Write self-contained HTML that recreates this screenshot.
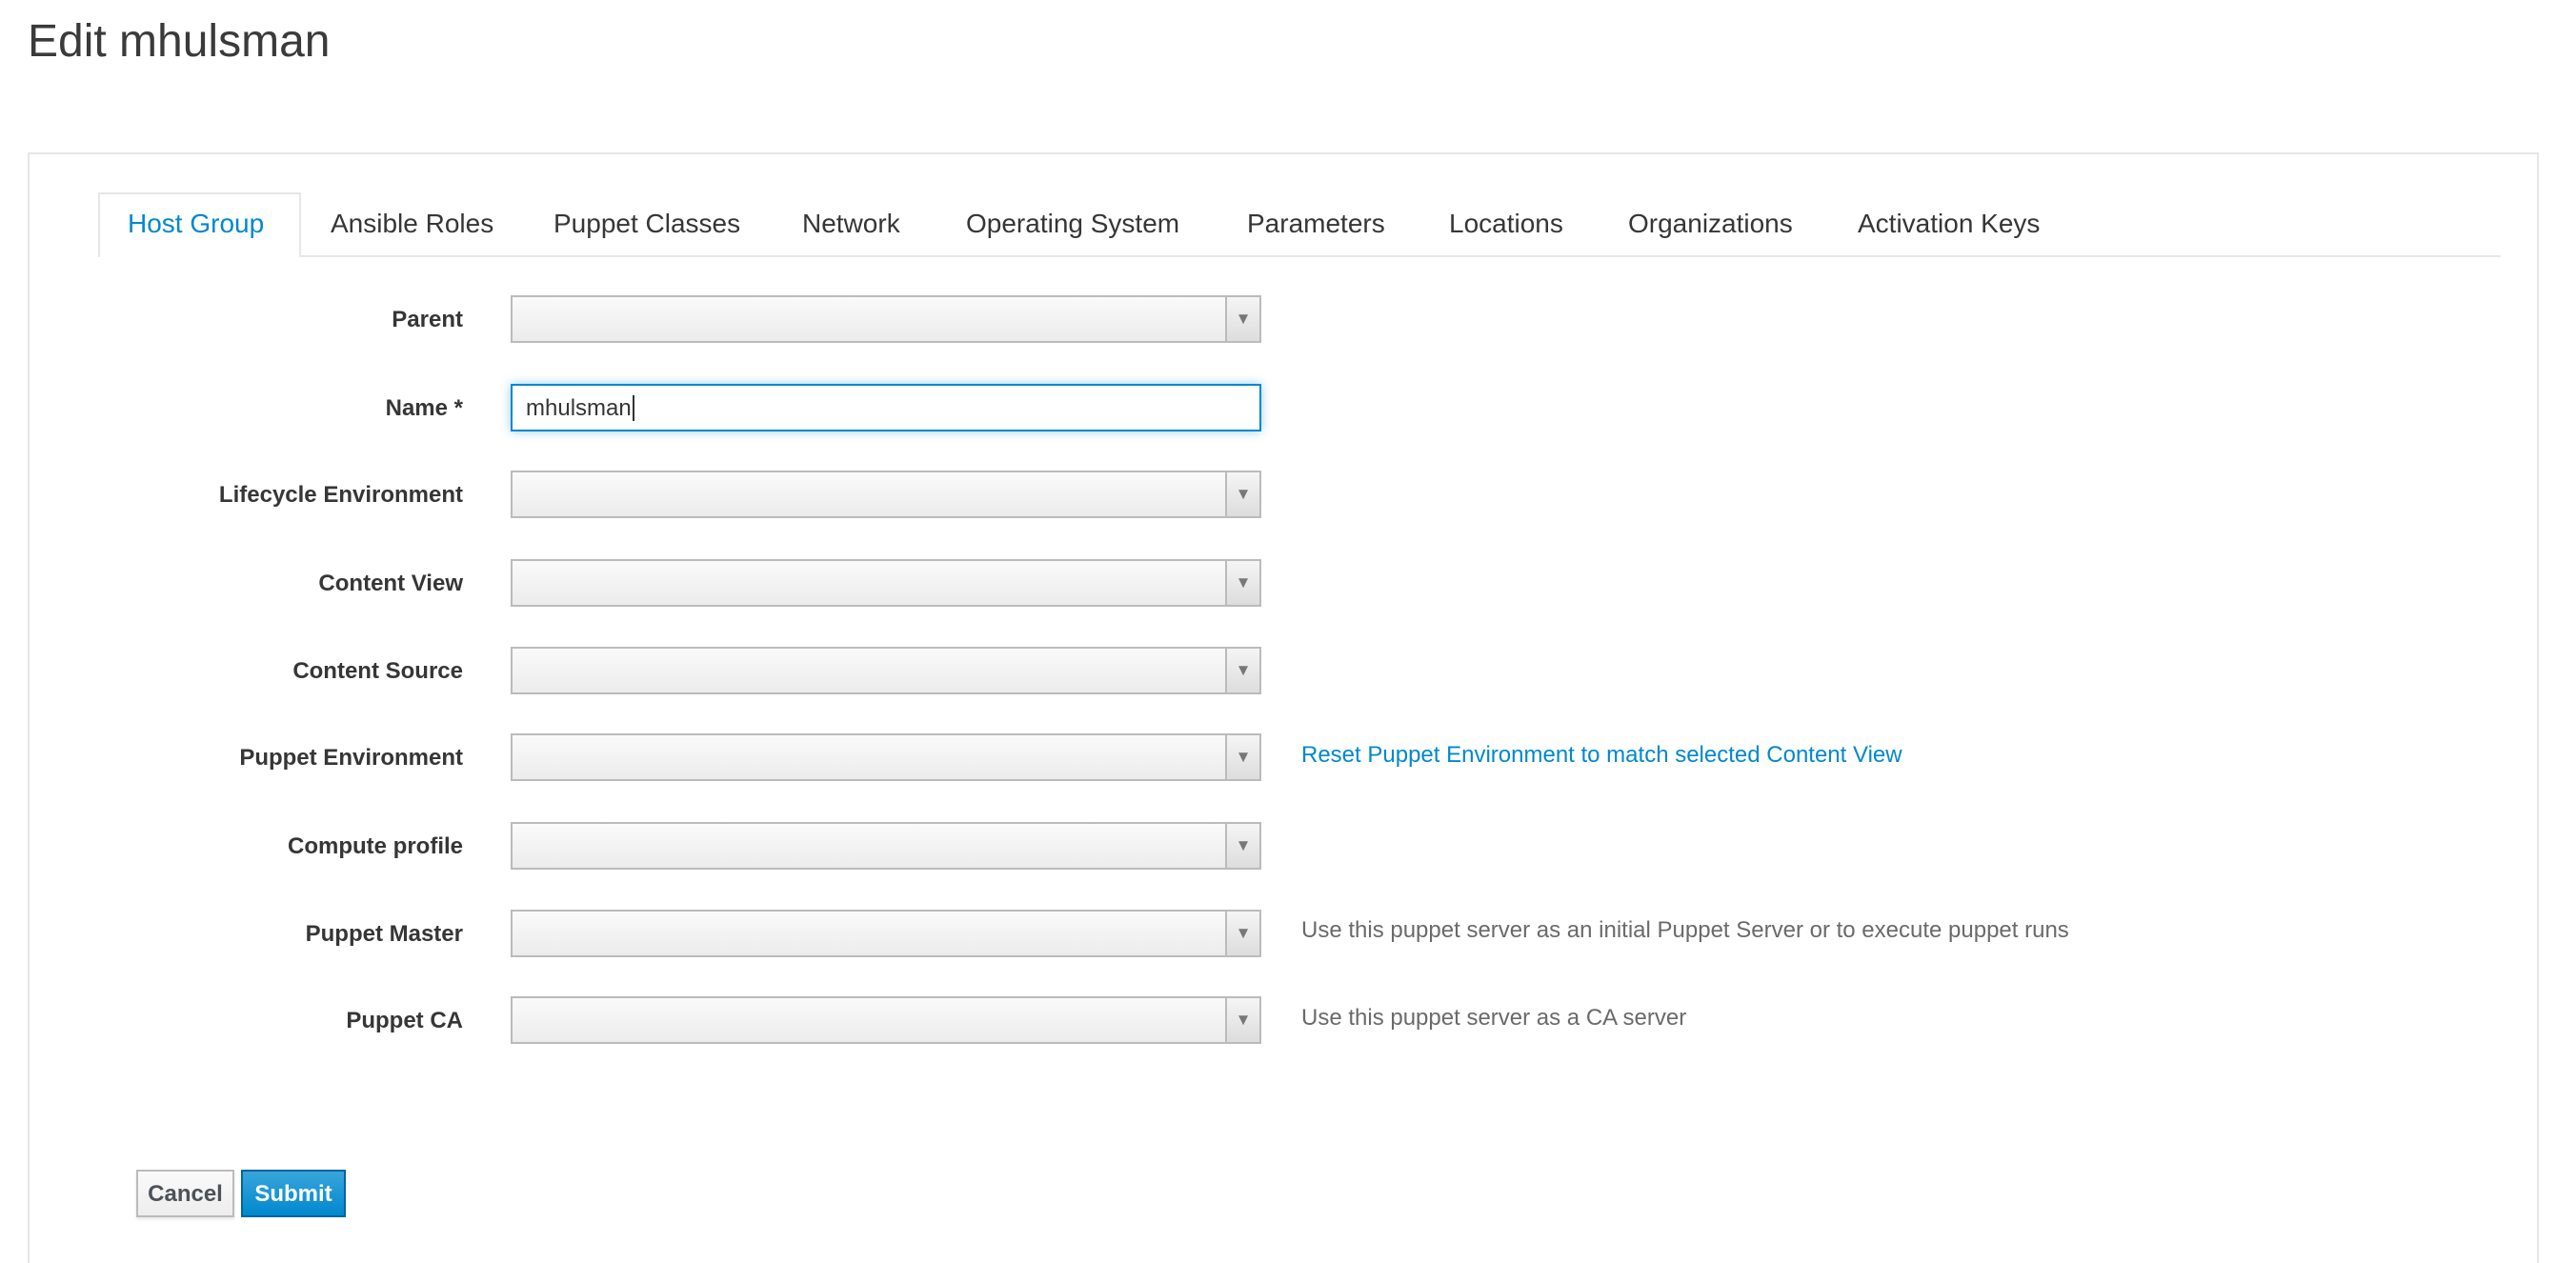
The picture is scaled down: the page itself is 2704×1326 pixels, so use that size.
<!DOCTYPE html>
<html><head><meta charset="utf-8"><style>
html,body{margin:0;width:2704px;height:1326px;overflow:hidden}
body{background:#fff;font-family:"Liberation Sans",sans-serif;position:relative;color:#363636}
h1{position:absolute;left:29px;top:16px;margin:0;font-weight:normal;font-size:48px;color:#3a3a3a}
.panel{position:absolute;left:29px;top:160px;width:2636px;height:1300px;border:2px solid #e6e6e6;box-sizing:border-box}
.tabline{position:absolute;left:103px;top:268px;width:2522px;height:2px;background:#e6e6e6}
.tab1{position:absolute;left:103px;top:202px;width:213px;height:68px;border:2px solid #e6e6e6;border-bottom:none;box-sizing:border-box;background:#fff}
.tab{position:absolute;top:219px;font-size:28px;color:#363636;white-space:nowrap}
.lbl{position:absolute;right:2218px;font-size:24px;font-weight:bold;color:#363636;white-space:nowrap}
.sel{position:absolute;left:536px;width:788px;height:50px;border:2px solid #bbb;box-sizing:border-box;background:linear-gradient(#fafafa,#ececec)}
.sel:after{content:"▼";position:absolute;right:0;top:0;width:34px;height:46px;border-left:2px solid #bbb;background:linear-gradient(#f5f5f5,#ddd);color:#777;font-size:17px;text-align:center;line-height:46px}
.help{position:absolute;left:1366px;font-size:24px;color:#6a6a6a;white-space:nowrap}
</style></head><body>
<h1>Edit mhulsman</h1>
<div class="panel"></div>
<div class="tabline"></div>
<div class="tab1"></div>
<div class="tab" style="left:134px;color:#0088ce">Host Group</div>
<div class="tab" style="left:347px">Ansible Roles</div>
<div class="tab" style="left:581px">Puppet Classes</div>
<div class="tab" style="left:842px">Network</div>
<div class="tab" style="left:1014px">Operating System</div>
<div class="tab" style="left:1309px">Parameters</div>
<div class="tab" style="left:1521px">Locations</div>
<div class="tab" style="left:1709px">Organizations</div>
<div class="tab" style="left:1950px">Activation Keys</div>

<div class="lbl" style="top:322px">Parent</div><div class="sel" style="top:310px"></div>
<div class="lbl" style="top:415px">Name *</div>
<div style="position:absolute;left:536px;top:403px;width:788px;height:50px;border:2px solid #0088ce;box-sizing:border-box;box-shadow:0 0 10px rgba(0,136,206,.4);font-size:24px;line-height:48px;padding-left:14px;color:#363636">mhulsman<span style="border-left:2px solid #333;margin-left:1px"></span></div>
<div class="lbl" style="top:506px">Lifecycle Environment</div><div class="sel" style="top:494px"></div>
<div class="lbl" style="top:599px">Content View</div><div class="sel" style="top:587px"></div>
<div class="lbl" style="top:691px">Content Source</div><div class="sel" style="top:679px"></div>
<div class="lbl" style="top:782px">Puppet Environment</div><div class="sel" style="top:770px"></div>
<div class="help" style="top:779px;color:#0088ce">Reset Puppet Environment to match selected Content View</div>
<div class="lbl" style="top:875px">Compute profile</div><div class="sel" style="top:863px"></div>
<div class="lbl" style="top:967px">Puppet Master</div><div class="sel" style="top:955px"></div>
<div class="help" style="top:963px">Use this puppet server as an initial Puppet Server or to execute puppet runs</div>
<div class="lbl" style="top:1058px">Puppet CA</div><div class="sel" style="top:1046px"></div>
<div class="help" style="top:1055px">Use this puppet server as a CA server</div>

<div style="position:absolute;left:143px;top:1228px;width:103px;height:50px;border:2px solid #bbb;box-sizing:border-box;background:linear-gradient(#fafafa,#ededed);font-size:24px;font-weight:bold;color:#4d5258;text-align:center;line-height:48px;box-shadow:0 2px 3px rgba(0,0,0,.1)">Cancel</div>
<div style="position:absolute;left:253px;top:1228px;width:110px;height:50px;border:2px solid #00659c;box-sizing:border-box;background:linear-gradient(#39a5dc,#0088ce);font-size:24px;font-weight:bold;color:#fff;text-align:center;line-height:48px">Submit</div>
</body></html>
